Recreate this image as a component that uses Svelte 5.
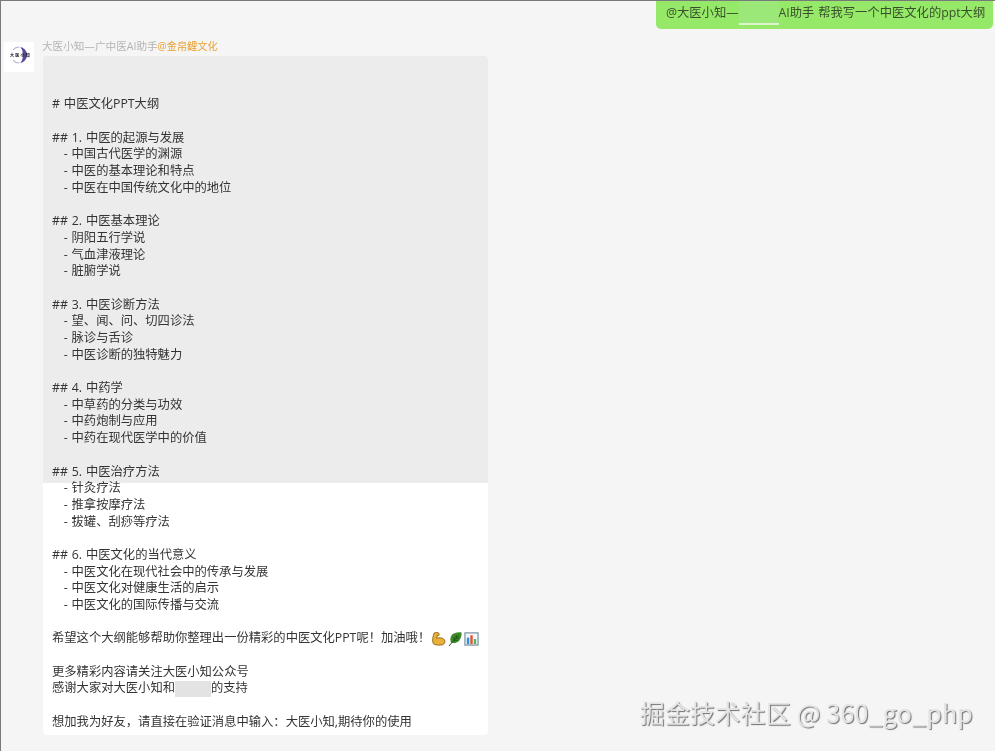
<script>
  const outline = `

# 中医文化PPT大纲

## 1. 中医的起源与发展
   - 中国古代医学的渊源
   - 中医的基本理论和特点
   - 中医在中国传统文化中的地位

## 2. 中医基本理论
   - 阴阳五行学说
   - 气血津液理论
   - 脏腑学说

## 3. 中医诊断方法
   - 望、闻、问、切四诊法
   - 脉诊与舌诊
   - 中医诊断的独特魅力

## 4. 中药学
   - 中草药的分类与功效
   - 中药炮制与应用
   - 中药在现代医学中的价值

## 5. 中医治疗方法
   - 针灸疗法
   - 推拿按摩疗法
   - 拔罐、刮痧等疗法

## 6. 中医文化的当代意义
   - 中医文化在现代社会中的传承与发展
   - 中医文化对健康生活的启示
   - 中医文化的国际传播与交流
`;
</script>

<div class="page">
  <div class="outgoing">
    <div class="sent">@大医小知—<span class="redact-green"></span>AI助手 帮我写一个中医文化的ppt大纲</div>
  </div>

  <div class="message">
    <div class="avatar">
      <svg width="30" height="30" viewBox="0 0 30 30">
        <path d="M15 5a8 8 0 1 1 0 16a4 8 0 0 0 0-16z" fill="#55479a" />
        <path d="M15 5a8 8 0 0 0-6 3" fill="none" stroke="#b4acd8" stroke-width="1.200" />
        <path d="M9 18a8 8 0 0 0 6 3" fill="none" stroke="#b4acd8" stroke-width="1.200" />
        <text x="16.500" y="15" text-anchor="middle" class="avatar-text">大医小知</text>
      </svg>
    </div>
    <div class="content">
      <div class="sender">大医小知—广中医AI助手<span class="org">@金帛鲤文化</span></div>
      <div class="bubble">
        <div class="outline">{outline}</div>
        <div class="line blank"></div>
        <div class="line">
          希望这个大纲能够帮助你整理出一份精彩的中医文化PPT呢！加油哦！
          <span class="emojis">
            <svg width="15" height="16" viewBox="0 0 16 16">
              <path d="M3.500 1.500C5 .8 7.500 1 8.500 2L8.500 4 6.500 4.500 6 7.500C8 6 12 6.500 14 8.500 15.500 10.500 15 13 12.500 14 9 15 4 14.500 2.500 13 1 10 2 5 3.500 1.500Z" fill="#e8b23a" stroke="#94650f" stroke-width="1" />
            </svg>
            <svg width="14" height="16" viewBox="0 0 15 16">
              <path d="M14.500 1C10 .5 5 1.500 3.200 5 2 7.800 2.500 10.500 3.500 12 6.500 13 10.500 12 12.500 9 14 6.800 14.800 4 14.500 1z" fill="#3d8a2a" />
              <path d="M1 15.500 4.500 11.500M4.500 11.500 11.500 4M6.500 9.300V5.800M8.800 7V4M6.500 9.300h3.700M8.800 7h3.200" stroke="#1d5614" stroke-width="1" fill="none" />
            </svg>
            <svg width="15" height="16" viewBox="0 0 16 16">
              <rect x="1" y="1.500" width="14" height="13" fill="#f4f8fa" stroke="#6f8b9c" stroke-width="1.200" />
              <rect x="3" y="6.500" width="2.600" height="7" fill="#2f93d6" />
              <rect x="6.700" y="4" width="2.600" height="9.500" fill="#e0533f" />
              <rect x="10.400" y="8" width="2.600" height="5.500" fill="#58b458" />
            </svg>
          </span>
        </div>
        <div class="line blank"></div>
        <div class="line">更多精彩内容请关注大医小知公众号</div>
        <div class="line">感谢大家对大医小知和<span class="redact-grey"></span>的支持</div>
        <div class="line blank"></div>
        <div class="line">想加我为好友，请直接在验证消息中输入：大医小知,期待你的使用</div>
      </div>
    </div>
  </div>

  <div class="watermark">掘金技术社区 @ 360_go_php</div>
</div>

<style>
  :global(body) {
    margin: 0;
    background: #f5f5f5;
  }

  .page {
    position: relative;
    width: 995px;
    height: 751px;
    box-sizing: border-box;
    overflow: hidden;
    background: #f5f5f5;
    border-top: 1px solid #77797a;
    border-left: 1px solid #77797a;
    font-family: "Open Sans", "Noto Sans CJK SC", sans-serif;
    font-size: 12.300px;
    word-spacing: 0.700px;
    color: #333;
    filter: blur(0.300px);
  }

  .outgoing {
    display: flex;
    justify-content: flex-end;
    padding-right: 2px;
  }

  .sent {
    display: flex;
    align-items: flex-start;
    box-sizing: border-box;
    width: 337px;
    height: 28px;
    padding: 3px 0 0 10px;
    background: #96e868;
    border-radius: 0 0 5px 5px;
    line-height: 18px;
    color: #38502c;
    white-space: pre;
  }

  .redact-green {
    flex: none;
    width: 40px;
    height: 24px;
    margin-top: -3px;
    background: #9be878;
    border-bottom: 2px solid #dcf3cf;
    box-sizing: border-box;
  }

  .message {
    display: flex;
    gap: 8px;
    margin-top: 10px;
    padding-left: 3px;
  }

  .avatar {
    flex: none;
    width: 30px;
    height: 30px;
    margin-top: 3px;
    background: #fff;
  }

  .avatar-text {
    font-size: 4px;
    letter-spacing: 1.200px;
    font-weight: 700;
    fill: #14141f;
  }

  .content {
    width: 446px;
  }

  .sender {
    height: 17px;
    font-size: 10.600px;
    line-height: 15px;
    word-spacing: 0;
    color: #b4b4b4;
  }

  .org {
    font-size: 10.200px;
    color: #e8a030;
  }

  .bubble {
    box-sizing: border-box;
    height: 679px;
    margin-left: 1px;
    padding: 7px 9px 0;
    border-radius: 4px;
    background: linear-gradient(#ececec 0 427px, #fff 427px);
    line-height: 16.680px;
  }

  .outline {
    white-space: pre;
  }

  .line {
    display: flex;
    align-items: center;
    height: 16.680px;
    white-space: nowrap;
  }

  .emojis {
    flex: none;
    display: flex;
    gap: 2px;
    margin-left: 1px;
  }

  .redact-grey {
    flex: none;
    width: 36px;
    height: 16px;
    background: #e3e3e3;
  }

  .watermark {
    position: absolute;
    right: 22px;
    bottom: 24px;
    font-family: "Noto Sans CJK SC", sans-serif;
    font-size: 25px;
    line-height: 30px;
    letter-spacing: 0.200px;
    word-spacing: 0;
    color: #e4e4e4;
    text-shadow: 1px 1px 1px #6f6f6f;
    white-space: nowrap;
  }
</style>
